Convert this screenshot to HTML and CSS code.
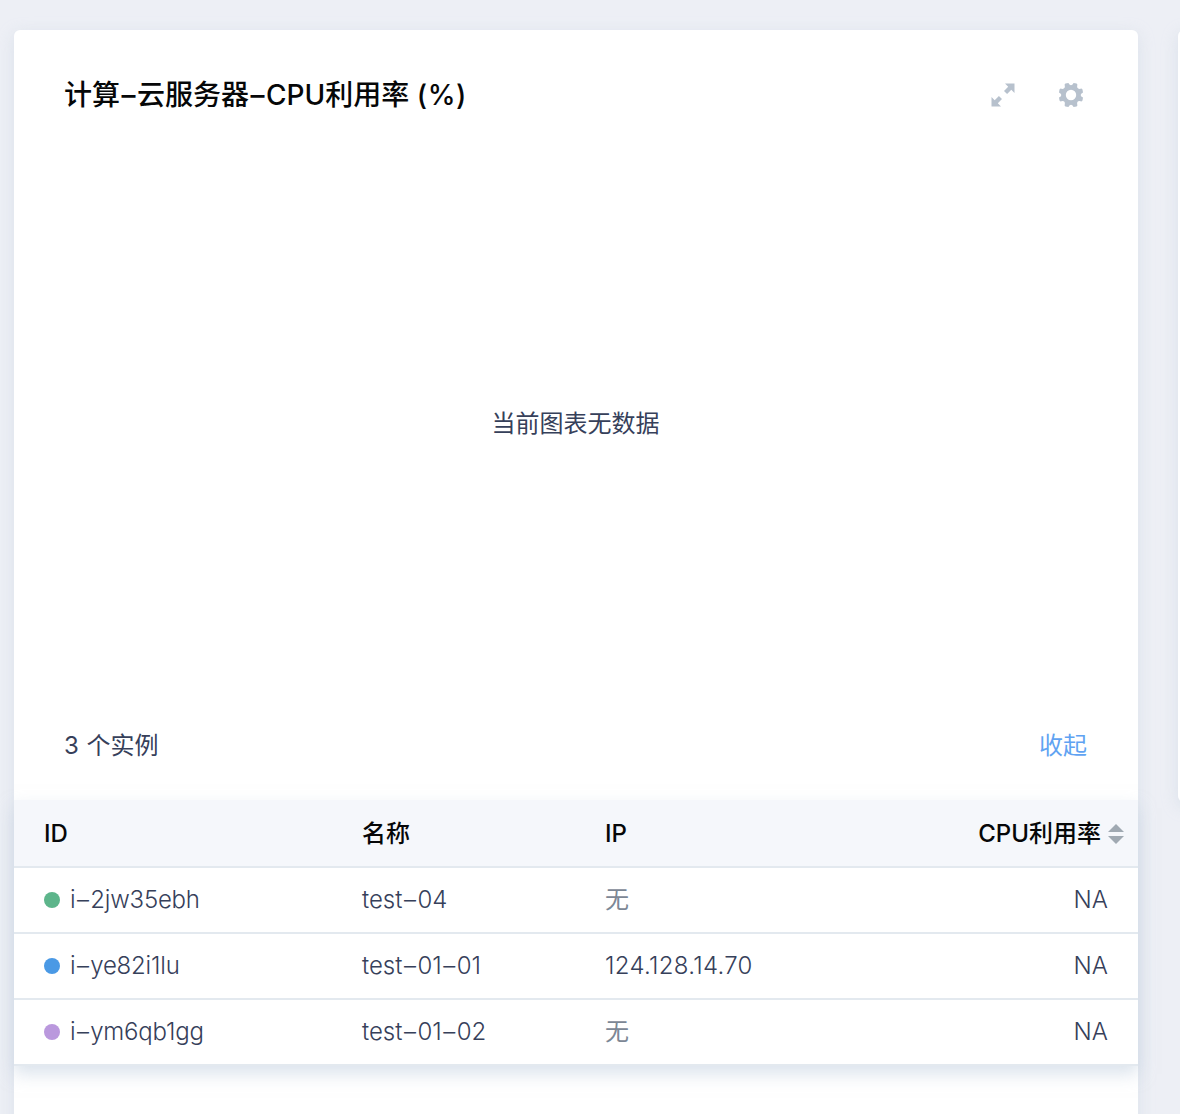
FILE: index.html
```html
<!DOCTYPE html>
<html lang="zh-CN">
<head>
<meta charset="utf-8">
<title>云服务器监控</title>
<link rel="stylesheet" href="styles.css">
</head>
<body>
<main class="board">
  <section class="card">
    <header class="card-head">
      <h1 class="title">计算<span class="dash">–</span>云服务器<span class="dash">–</span>CPU利用率 <span class="title-unit">(%)</span></h1>
      <div class="actions">
        <svg class="icon" viewBox="0 0 24 24" aria-hidden="true"><path d="M14 .5h9.5V10l-3.2-3.2-4.2 4.2-3.1-3.1 4.2-4.2zM.5 23.5V14l3.2 3.2 4.2-4.2 3.1 3.1-4.2 4.2 3.2 3.2z"/></svg>
        <svg class="icon" viewBox="0 0 24 24" aria-hidden="true"><path fill-rule="evenodd" d="M6.4 .5L9.4 0Q12 4.6 14.6 0L17.6 .5L18.4 1.5Q17 7 22.5 5.6L23.5 6.4L24 9.4Q19.4 12 24 14.6L23.5 17.6L22.5 18.4Q17 17 18.4 22.5L17.6 23.5L14.6 24Q12 19.4 9.4 24L6.4 23.5L5.6 22.5Q7 17 1.5 18.4L.5 17.6L0 14.6Q4.6 12 0 9.4L.5 6.4L1.5 5.6Q7 7 5.6 1.5zM12 6.8a5.2 5.2 0 1 0 0 10.4a5.2 5.2 0 0 0 0-10.4z"/></svg>
      </div>
    </header>
    <div class="empty">当前图表无数据</div>
    <div class="summary"><span class="count">3 个实例</span><a class="toggle">收起</a></div>
    <div class="table">
      <div class="row row-head"><span>ID</span><span>名称</span><span>IP</span><span class="num sortable">CPU利用率<svg class="sort" viewBox="0 0 16 20" aria-hidden="true"><path d="M8 0l8 8H0zM0 12h16l-8 8z"/></svg></span></div>
      <div class="row"><span class="id"><i class="dot green"></i>i<span class="dash">–</span>2jw35ebh</span><span>test<span class="dash">–</span>04</span><span class="none">无</span><span class="num">NA</span></div>
      <div class="row"><span class="id"><i class="dot blue"></i>i<span class="dash">–</span>ye82i1lu</span><span>test<span class="dash">–</span>01<span class="dash">–</span>01</span><span class="ip">124.128.14.70</span><span class="num">NA</span></div>
      <div class="row"><span class="id"><i class="dot purple"></i>i<span class="dash">–</span>ym6qb1gg</span><span>test<span class="dash">–</span>01<span class="dash">–</span>02</span><span class="none">无</span><span class="num">NA</span></div>
    </div>
  </section>
  <section class="card next"></section>
</main>
</body>
</html>
```
FILE: styles.css
```css
* { box-sizing: border-box; }
body {
  margin: 0;
  height: 1114px;
  overflow: hidden;
  background: #edeff5;
  color: #36405a;
  font: 350 24px/36px Inter, "Noto Sans CJK SC", sans-serif;
}
.board {
  display: grid;
  grid-template-columns: 1124px 1124px;
  gap: 40px;
  align-items: start;
  height: 1114px;
  padding: 30px 0 0 14px;
  overflow: hidden;
}
.card {
  height: 1120px;
  background: #fff;
  border-radius: 6px;
  box-shadow: 0 4px 16px rgba(190, 204, 220, .4);
}
.next { height: 772px; }
.card-head {
  display: flex;
  justify-content: space-between;
  align-items: center;
  height: 129px;
  padding: 0 55px 0 50px;
}
.title { margin: 0; color: #060708; font-size: 28px; font-weight: 500; line-height: 40px; white-space: nowrap; }
.title-unit { letter-spacing: .6px; }
.dash { margin: 0 1.5px; }
.actions { display: flex; gap: 44px; }
.icon { width: 24px; height: 24px; fill: #b7c1cd; }
.empty { display: flex; align-items: center; justify-content: center; height: 529px; padding-right: 1px; font-weight: 400; }
.summary { display: flex; justify-content: space-between; height: 112px; padding: 40px 51px 0 50px; font-weight: 400; }
.count { word-spacing: 1px; }
.toggle { color: #60a3f2; }
.table { background: #fff; box-shadow: 0 8px 16px rgba(190, 204, 220, .55); }
.row {
  display: grid;
  grid-template-columns: 318px 243px 240px 1fr;
  align-items: center;
  height: 66px;
  padding: 0 30px;
  border-bottom: 2px solid #e3e9ef;
}
.row-head { height: 68px; padding-top: 2px; padding-right: 14px; background: #f5f7fb; color: #060708; font-weight: 500; }
.id, .sortable { display: flex; align-items: center; }
.id { letter-spacing: -.2px; }
.dot { width: 16px; height: 16px; margin-right: 10px; border-radius: 50%; }
.green { background: #5db58b; }
.blue { background: #4a99e5; }
.purple { background: #ba98dd; }
.ip { letter-spacing: .3px; }
.none { color: #7c8795; font-weight: 400; }
.num { text-align: right; }
.sortable { justify-content: flex-end; gap: 7px; }
.sort { width: 16px; height: 20px; fill: #a0a9b2; }
```
